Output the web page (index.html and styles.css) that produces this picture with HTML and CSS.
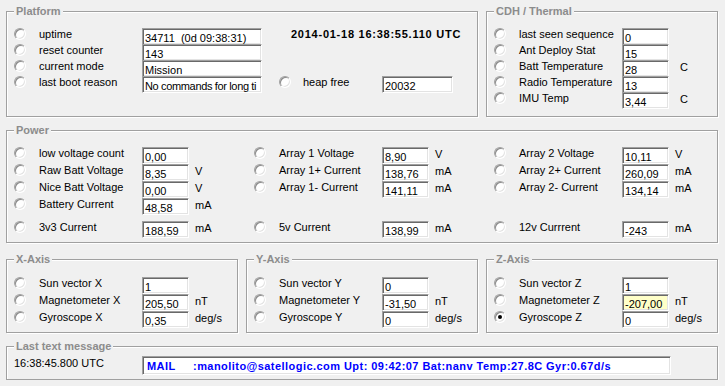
FILE: index.html
```html
<!DOCTYPE html>
<html lang="en">
<head>
  <meta charset="UTF-8">
  <title>Satellite Telemetry</title>
  <link rel="stylesheet" href="styles.css">
</head>
<body>

<div class="window">

  <div class="line">
    <div class="group platform">
      <div class="group-title">Platform</div>
      <div class="cols">
        <div class="col col-wide">
          <div class="row"><span class="radio"></span><span class="label">uptime</span><span class="box box-long">34711  (0d 09:38:31)</span></div>
          <div class="row"><span class="radio"></span><span class="label">reset counter</span><span class="box box-long">143</span></div>
          <div class="row"><span class="radio"></span><span class="label">current mode</span><span class="box box-long">Mission</span></div>
          <div class="row"><span class="radio"></span><span class="label">last boot reason</span><span class="box box-long box-tight">No commands for long ti</span></div>
        </div>
        <div class="col col-side">
          <div class="clock">2014-01-18 16:38:55.110 UTC</div>
          <div class="row heap"><span class="radio"></span><span class="label label-short">heap free</span><span class="box box-mid">20032</span></div>
        </div>
      </div>
    </div>

    <div class="group cdh">
      <div class="group-title">CDH / Thermal</div>
      <div class="col">
        <div class="row"><span class="radio"></span><span class="label">last seen sequence</span><span class="box">0</span></div>
        <div class="row"><span class="radio"></span><span class="label">Ant Deploy Stat</span><span class="box">15</span></div>
        <div class="row"><span class="radio"></span><span class="label">Batt Temperature</span><span class="box">28</span><span class="unit">C</span></div>
        <div class="row"><span class="radio"></span><span class="label">Radio Temperature</span><span class="box">13</span></div>
        <div class="row"><span class="radio"></span><span class="label">IMU Temp</span><span class="box">3,44</span><span class="unit">C</span></div>
      </div>
    </div>
  </div>

  <div class="group power">
    <div class="group-title">Power</div>
    <div class="cols">
      <div class="col">
        <div class="row"><span class="radio"></span><span class="label">low voltage count</span><span class="box">0,00</span></div>
        <div class="row"><span class="radio"></span><span class="label">Raw Batt Voltage</span><span class="box">8,35</span><span class="unit">V</span></div>
        <div class="row"><span class="radio"></span><span class="label">Nice Batt Voltage</span><span class="box">0,00</span><span class="unit">V</span></div>
        <div class="row"><span class="radio"></span><span class="label">Battery Current</span><span class="box">48,58</span><span class="unit">mA</span></div>
        <div class="row rail"><span class="radio"></span><span class="label">3v3 Current</span><span class="box">188,59</span><span class="unit">mA</span></div>
      </div>
      <div class="col">
        <div class="row"><span class="radio"></span><span class="label">Array 1 Voltage</span><span class="box">8,90</span><span class="unit">V</span></div>
        <div class="row"><span class="radio"></span><span class="label">Array 1+ Current</span><span class="box">138,76</span><span class="unit">mA</span></div>
        <div class="row"><span class="radio"></span><span class="label">Array 1- Current</span><span class="box">141,11</span><span class="unit">mA</span></div>
        <div class="row"></div>
        <div class="row rail"><span class="radio"></span><span class="label">5v Current</span><span class="box">138,99</span><span class="unit">mA</span></div>
      </div>
      <div class="col col-rest">
        <div class="row"><span class="radio"></span><span class="label">Array 2 Voltage</span><span class="box">10,11</span><span class="unit">V</span></div>
        <div class="row"><span class="radio"></span><span class="label">Array 2+ Current</span><span class="box">260,09</span><span class="unit">mA</span></div>
        <div class="row"><span class="radio"></span><span class="label">Array 2- Current</span><span class="box">134,14</span><span class="unit">mA</span></div>
        <div class="row"></div>
        <div class="row rail"><span class="radio"></span><span class="label">12v Currrent</span><span class="box">-243</span><span class="unit">mA</span></div>
      </div>
    </div>
  </div>

  <div class="line axes">
    <div class="group axis">
      <div class="group-title">X-Axis</div>
      <div class="row"><span class="radio"></span><span class="label">Sun vector X</span><span class="box">1</span></div>
      <div class="row"><span class="radio"></span><span class="label">Magnetometer X</span><span class="box">205,50</span><span class="unit">nT</span></div>
      <div class="row"><span class="radio"></span><span class="label">Gyroscope X</span><span class="box">0,35</span><span class="unit">deg/s</span></div>
    </div>
    <div class="group axis">
      <div class="group-title">Y-Axis</div>
      <div class="row"><span class="radio"></span><span class="label">Sun vector Y</span><span class="box">0</span></div>
      <div class="row"><span class="radio"></span><span class="label">Magnetometer Y</span><span class="box">-31,50</span><span class="unit">nT</span></div>
      <div class="row"><span class="radio"></span><span class="label">Gyroscope Y</span><span class="box">0</span><span class="unit">deg/s</span></div>
    </div>
    <div class="group axis">
      <div class="group-title">Z-Axis</div>
      <div class="row"><span class="radio"></span><span class="label">Sun vector Z</span><span class="box">1</span></div>
      <div class="row"><span class="radio"></span><span class="label">Magnetometer Z</span><span class="box box-warn">-207,00</span><span class="unit">nT</span></div>
      <div class="row"><span class="radio checked"></span><span class="label">Gyroscope Z</span><span class="box">0</span><span class="unit">deg/s</span></div>
    </div>
  </div>

  <div class="group last">
    <div class="group-title">Last text message</div>
    <span class="stamp">16:38:45.800 UTC</span>
    <span class="box box-msg">MAIL     :manolito@satellogic.com Upt: 09:42:07 Bat:nanv Temp:27.8C Gyr:0.67d/s</span>
  </div>

</div>

</body>
</html>
```

FILE: styles.css
```css
body {
  margin: 0;
  background: #f0f0f0;
  font-family: "Liberation Sans", Arial, sans-serif;
  font-size: 11px;
  color: #000;
}
.window {
  width: 712px;
  padding: 11px 0 0 6px;
}
.line {
  display: flex;
  gap: 8px;
}
.group {
  position: relative;
  box-sizing: border-box;
  border: 1px solid #a0a0a0;
  box-shadow: inset 1px 1px 0 #fff, 1px 1px 0 #fff;
}
.group-title {
  position: absolute;
  top: -7px;
  left: 7px;
  padding: 0 2px;
  background: #f0f0f0;
  color: #8c8c8c;
  font-weight: bold;
  line-height: 13px;
  white-space: nowrap;
}
.cols {
  display: flex;
}
.col {
  flex: none;
  width: 240px;
}
.col-wide {
  width: 272px;
}
.col-side,
.col-rest {
  flex: 1 1 auto;
  width: auto;
  min-width: 0;
}
.row {
  display: flex;
  align-items: flex-start;
  height: 16px;
}
.radio {
  position: relative;
  flex: none;
  box-sizing: border-box;
  width: 12px;
  height: 12px;
  margin: 0 13px 0 7px;
  border-radius: 50%;
  border: 1px solid;
  border-color: #a0a0a0 #fff #fff #a0a0a0;
  background: #fff;
  box-shadow: inset 1px 1px 0 #8a8a8a, inset -1px -1px 0 #e3e3e3;
}
.radio.checked::after {
  content: "";
  position: absolute;
  left: 3px;
  top: 3px;
  width: 4px;
  height: 4px;
  border-radius: 50%;
  background: #000;
}
.label {
  flex: none;
  width: 103px;
  line-height: 13px;
  white-space: nowrap;
}
.label-short {
  width: 79px;
}
.box {
  flex: none;
  box-sizing: border-box;
  width: 47px;
  height: 17px;
  padding: 3px 0 0 2px;
  background: #fff;
  border: 1px solid;
  border-color: #a0a0a0 #fff #fff #a0a0a0;
  box-shadow: inset 1px 1px 0 #696969, inset -1px -1px 0 #e3e3e3;
  line-height: 12px;
  white-space: pre;
  overflow: hidden;
}
.box-long {
  width: 120px;
}
.box-tight {
  letter-spacing: -0.35px;
}
.box-mid {
  width: 71px;
}
.box-warn {
  background: #ffffc8;
}
.unit {
  margin: 1px 0 0 6px;
  line-height: 13px;
}

/* platform */
.platform,
.cdh {
  height: 106px;
  padding-top: 16px;
}
.platform {
  width: 472px;
}
.clock {
  height: 48px;
  padding-left: 12px;
  font-weight: bold;
  line-height: 13px;
  letter-spacing: 0.75px;
  white-space: nowrap;
}
.heap .radio {
  margin: 0 12px 0 0;
}

/* cdh */
.cdh {
  width: 232px;
}
.cdh .unit {
  margin-left: 11px;
}

/* power */
.power {
  height: 113px;
  margin-top: 13px;
  padding-top: 16px;
}
.power .row,
.axis .row {
  height: 17px;
}
.power .rail {
  margin-top: 6px;
}

/* axes */
.axes {
  margin-top: 16px;
}
.axis {
  width: 232px;
  height: 74px;
  padding-top: 17px;
}

/* last message */
.last {
  display: flex;
  align-items: flex-start;
  height: 34px;
  margin-top: 13px;
  padding: 9px 0 0 7px;
}
.stamp {
  width: 128px;
  margin-top: 1px;
  line-height: 13px;
}
.box-msg {
  width: 529px;
  height: 19px;
  padding: 3px 0 0 4px;
  color: #0000ff;
  font-weight: bold;
  letter-spacing: 0.45px;
}
```
